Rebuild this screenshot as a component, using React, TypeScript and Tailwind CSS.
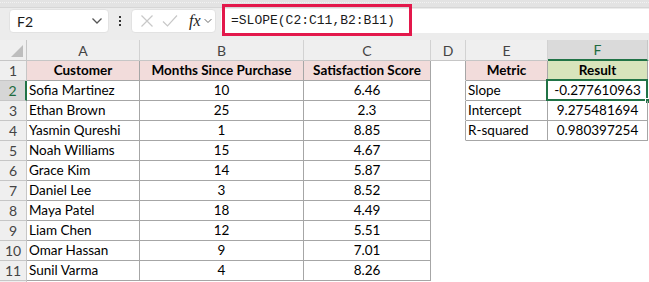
import React from 'react';

const COLS = [
  { key: 'A', w: 'w-[113px]' },
  { key: 'B', w: 'w-[164px]' },
  { key: 'C', w: 'w-[127px]' },
  { key: 'D', w: 'w-[35px]' },
  { key: 'E', w: 'w-[82px]' },
  { key: 'F', w: 'w-[100px]' },
];

const DATA: [string, string, string][] = [
  ['Sofia Martinez', '10', '6.46'],
  ['Ethan Brown', '25', '2.3'],
  ['Yasmin Qureshi', '1', '8.85'],
  ['Noah Williams', '15', '4.67'],
  ['Grace Kim', '14', '5.87'],
  ['Daniel Lee', '3', '8.52'],
  ['Maya Patel', '18', '4.49'],
  ['Liam Chen', '12', '5.51'],
  ['Omar Hassan', '9', '7.01'],
  ['Sunil Varma', '4', '8.26'],
];

const METRICS: [string, string][] = [
  ['Slope', '-0.277610963'],
  ['Intercept', '9.275481694'],
  ['R-squared', '0.980397254'],
];

const font = { fontFamily: 'Lato, "Open Sans", sans-serif' };

const Chevron = ({ className }: { className?: string }) => (
  <svg width="12" height="8" viewBox="0 0 12 8" className={className}>
    <path d="M1.5 1.5 L6 6 L10.5 1.5" fill="none" stroke="currentColor" strokeWidth="1.3" />
  </svg>
);

const FormulaBar = () => (
  <div className="relative">
    <div className="h-[8px] bg-[#e3e3e3] border-b border-[#d6d6d6]">
      <div className="h-[3px] border-b border-dotted border-[#f2f2f2]" />
    </div>
    <div className="h-[32px] bg-[#ececec] flex items-start pt-[1px]">
      <div className="ml-[9px] w-[100px] h-[24px] bg-white rounded-[4px] border border-[#e2e2e2] flex items-center justify-between pl-[7px] pr-[5px] text-[14px] text-[#1a1a1a]" style={font}>
        <span>F2</span>
        <Chevron className="text-[#555]" />
      </div>
      <div className="w-[22px] h-[24px] flex flex-col items-center justify-center gap-[2px]">
        <span className="w-[2px] h-[2px] bg-[#333]" />
        <span className="w-[2px] h-[2px] bg-[#333]" />
        <span className="w-[2px] h-[2px] bg-[#333]" />
      </div>
      <div className="w-[85px] h-[24px] bg-white rounded-[4px] border border-[#e2e2e2] flex items-center pl-[8px] gap-[8px]">
        <svg width="14" height="14" viewBox="0 0 14 14">
          <path d="M1.5 1.5 L12.5 12.5 M12.5 1.5 L1.5 12.5" stroke="#c8c8c8" strokeWidth="1.2" fill="none" />
        </svg>
        <svg width="16" height="14" viewBox="0 0 16 14">
          <path d="M1 7.5 L5.5 12 L15 1.5" stroke="#c8c8c8" strokeWidth="1.2" fill="none" />
        </svg>
        <span className="flex items-center ml-[3px] gap-[1px]">
          <span className="italic text-[16px] text-[#222] leading-none" style={{ fontFamily: '"Liberation Serif", serif' }}>fx</span>
          <Chevron className="text-[#666] scale-75" />
        </span>
      </div>
      <div className="ml-[5px] flex-1 h-[24px] bg-white rounded-l-[4px] flex items-center pl-[10px] text-[13px] text-[#1a1a1a]" style={{ fontFamily: '"Liberation Mono", monospace' }}>
        =SLOPE(C2:C11,B2:B11)
      </div>
    </div>
    <div className="absolute left-[222px] top-[4px] w-[190px] h-[32px] border-[3px] border-[#e3184b]" />
  </div>
);

type CellProps = {
  w: string;
  children?: React.ReactNode;
  className?: string;
};

const Cell = ({ w, children, className = '' }: CellProps) => (
  <div className={`${w} h-[20px] shrink-0 border-r border-b flex items-center text-[13.5px] text-black whitespace-nowrap ${className}`}>
    {children}
  </div>
);

const Sheet = () => {
  const rows = Array.from({ length: 12 }, (_, i) => i + 1);
  return (
    <div style={font}>
      {/* column headers */}
      <div className="flex h-[21px]">
        <div className="w-[27px] h-[21px] shrink-0 bg-[#efefef] border-r border-b border-[#c6c6c6] relative">
          <svg width="12" height="12" viewBox="0 0 12 12" className="absolute right-[3px] bottom-[3px]">
            <path d="M12 0 L12 12 L0 12 Z" fill="#bdbdbd" />
          </svg>
        </div>
        {COLS.map((c) => (
          <div
            key={c.key}
            className={`${c.w} h-[21px] shrink-0 flex items-center justify-center text-[14px] border-r ${
              c.key === 'F'
                ? 'bg-[#dadada] text-[#1e6b3f] border-b-2 border-b-[#217346] border-r-[#c6c6c6]'
                : 'bg-[#efefef] text-[#444] border-b border-[#c6c6c6] border-r-[#d2d2d2]'
            }`}
          >
            {c.key}
          </div>
        ))}
        <div className="flex-1 bg-[#efefef] border-b border-[#c6c6c6]" />
      </div>
      {rows.map((r) => {
        const d = r >= 2 && r <= 11 ? DATA[r - 2] : null;
        const m = r >= 2 && r <= 4 ? METRICS[r - 2] : null;
        const inTable = r <= 11;
        const inMetric = r <= 4;
        const tb = 'border-[#a6a6a6]';
        const none = 'border-transparent';
        return (
          <div key={r} className="flex h-[20px]">
            <div
              className={`w-[27px] h-[20px] shrink-0 flex items-center justify-center text-[14px] border-b border-[#c6c6c6] ${
                r === 2
                  ? 'bg-[#d6d6d6] text-[#1e6b3f] border-r-2 border-r-[#217346]'
                  : 'bg-[#efefef] text-[#444] border-r border-r-[#c6c6c6]'
              }`}
            >
              {r <= 11 ? r : ''}
            </div>
            {/* A */}
            <Cell w="w-[113px]" className={`${inTable ? tb : none} ${r === 1 ? 'bg-[#f2dcdb] justify-center font-bold' : 'pl-[2px]'}`}>
              {r === 1 ? 'Customer' : d?.[0]}
            </Cell>
            {/* B */}
            <Cell w="w-[164px]" className={`${inTable ? tb : none} justify-center ${r === 1 ? 'bg-[#f2dcdb] font-bold' : ''}`}>
              {r === 1 ? 'Months Since Purchase' : d?.[1]}
            </Cell>
            {/* C */}
            <Cell w="w-[127px]" className={`${inTable ? tb : none} justify-center ${r === 1 ? 'bg-[#f2dcdb] font-bold' : ''}`}>
              {r === 1 ? 'Satisfaction Score' : d?.[2]}
            </Cell>
            {/* D */}
            <Cell w="w-[35px]" className={`border-b-transparent ${inMetric ? 'border-r-[#a6a6a6]' : 'border-r-transparent'}`} />
            {/* E */}
            <Cell w="w-[82px]" className={`${inMetric ? tb : none} ${r === 1 ? 'bg-[#f2dcdb] justify-center font-bold' : 'pl-[2px]'}`}>
              {r === 1 ? 'Metric' : m?.[0]}
            </Cell>
            {/* F */}
            <Cell w="w-[100px]" className={`${inMetric ? tb : none} justify-center relative ${r === 1 ? 'bg-[#d8e4bc] font-bold' : ''}`}>
              {r === 1 ? 'Result' : m?.[1]}
              {r === 2 && (
                <>
                  <div className="absolute left-[-2px] top-[-2px] right-[-1px] bottom-[-1px] border-2 border-[#217346]" />
                  <div className="absolute right-[-4px] bottom-[-4px] w-[6px] h-[6px] bg-[#217346] border border-white" />
                </>
              )}
            </Cell>
            <div className="flex-1 h-[20px]" />
          </div>
        );
      })}
    </div>
  );
};

export default function App() {
  return (
    <div className="w-[649px] h-[282px] overflow-hidden bg-white">
      <FormulaBar />
      <Sheet />
    </div>
  );
}
